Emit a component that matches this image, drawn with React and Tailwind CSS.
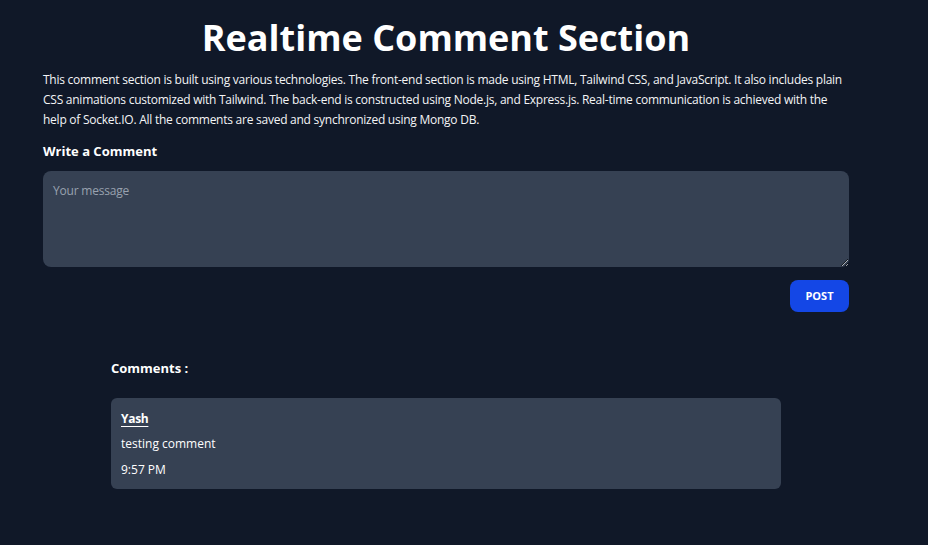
import React, { useState } from "react";

const comments = [{ name: "Yash", text: "testing comment", time: "9:57 PM" }];

export default function App() {
  const [message, setMessage] = useState("");

  return (
    <div
      className="min-h-[545px] w-full bg-gray-900 text-white"
      style={{ fontFamily: '"Open Sans", "Noto Sans", sans-serif' }}
    >
      <div className="ml-[43px] w-[806px] pt-[14px]">
        <h1 className="text-center text-[36px] font-bold leading-[48px]">
          Realtime Comment Section
        </h1>
        <p className="mt-[8px] text-[12px] leading-[20px] tracking-[-0.25px] text-gray-100">
          This comment section is built using various technologies. The
          front-end section is made using HTML, Tailwind CSS, and JavaScript. It
          also includes plain CSS animations customized with Tailwind. The
          back-end is constructed using Node.js, and Express.js. Real-time
          communication is achieved with the help of Socket.IO. All the comments
          are saved and synchronized using Mongo DB.
        </p>

        {/* comment form */}
        <label className="mt-[11px] block text-[13px] font-bold leading-5">
          Write a Comment
        </label>
        <textarea
          rows={4}
          value={message}
          onChange={(e) => setMessage(e.target.value)}
          placeholder="Your message"
          className="mt-[10px] block h-[96px] w-full rounded-lg bg-gray-700 px-[10px] pt-[11px] pb-[8px] text-[12px] tracking-[-0.2px] text-white placeholder-gray-400 outline-none"
        />
        <div className="mt-[13px] flex justify-end">
          <button
            type="button"
            className="h-[32px] w-[59px] rounded-lg bg-blue-700 text-[11px] font-bold text-white"
          >
            POST
          </button>
        </div>
      </div>

      <div className="ml-[111px] w-[670px] pt-[46px]">
        <h2 className="text-[13px] font-bold leading-5">Comments :</h2>
        <div className="mt-[20px] flex flex-col gap-3">
          {comments.map((c, i) => (
            <div
              key={i}
              className="rounded-md bg-gray-700 px-[10px] pb-[9px] pt-[11px]"
            >
              <p className="text-[12px] font-bold leading-5 tracking-[-0.3px] underline underline-offset-[3px]">
                {c.name}
              </p>
              <p className="mt-[5px] text-[12px] leading-5">{c.text}</p>
              <p className="mt-[6px] text-[12px] leading-5">{c.time}</p>
            </div>
          ))}
        </div>
      </div>
    </div>
  );
}
